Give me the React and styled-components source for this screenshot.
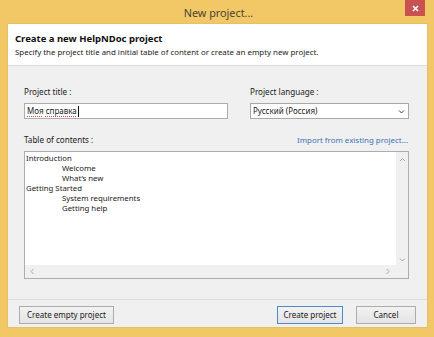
import React from 'react'
import styled, { createGlobalStyle } from 'styled-components'

const Global = createGlobalStyle`
	html, body {
		margin: 0;
		padding: 0;
		background: #f2c867;
	}
	* {
		box-sizing: border-box;
	}
`

const toc = [
	{ label: 'Introduction', level: 0 },
	{ label: 'Welcome', level: 1 },
	{ label: 'What\u2019s new', level: 1 },
	{ label: 'Getting Started', level: 0 },
	{ label: 'System requirements', level: 1 },
	{ label: 'Getting help', level: 1 },
]

function Chevron({ dir, size = 7, color = '#a6a6a6' }) {
	const pts = {
		up: '1,5 3.5,2.5 6,5',
		down: '1,2.5 3.5,5 6,2.5',
		left: '4.5,1 2,3.5 4.5,6',
		right: '2.5,1 5,3.5 2.5,6',
	}[dir]
	return (
		<svg width={size} height={size} viewBox="0 0 7 7">
			<polyline points={pts} fill="none" stroke={color} strokeWidth="1" />
		</svg>
	)
}

function App() {
	return (
		<>
			<Global />
			<Frame>
				<TitleBar>
					<span />
					<Title>New project...</Title>
					<CloseButton>
						<svg width="7" height="7" viewBox="0 0 7 7">
							<path d="M1 1L6 6M6 1L1 6" stroke="#fff" strokeWidth="1.6" />
						</svg>
					</CloseButton>
				</TitleBar>
				<Client>
					<Header>
						<Heading>Create a new HelpNDoc project</Heading>
						<SubHeading>
							Specify the project title and initial table of content or create an empty new project.
						</SubHeading>
					</Header>
					<Body>
						<FieldRow>
							<Field>
								<Label>Project title :</Label>
								<TextInput>
									<Misspelled>Моя</Misspelled>&nbsp;<Misspelled>справка</Misspelled>
									<Caret />
								</TextInput>
							</Field>
							<Field>
								<Label>Project language :</Label>
								<Select>
									<span>Русский (Россия)</span>
									<Chevron dir="down" color="#444" />
								</Select>
							</Field>
						</FieldRow>
						<TocHead>
							<Label>Table of contents :</Label>
							<Link>Import from existing project...</Link>
						</TocHead>
						<TreeBox>
							<TreeList>
								{toc.map((item) => (
									<TreeItem key={item.label} level={item.level}>
										{item.label}
									</TreeItem>
								))}
							</TreeList>
							<VScroll>
								<Chevron dir="up" />
								<Chevron dir="down" />
							</VScroll>
							<HScroll>
								<Chevron dir="left" />
								<Chevron dir="right" />
							</HScroll>
							<Corner />
						</TreeBox>
					</Body>
					<Footer>
						<Button width={95}>Create empty project</Button>
						<Spacer />
						<Button width={66} primary>Create project</Button>
						<Button width={60}>Cancel</Button>
					</Footer>
				</Client>
			</Frame>
		</>
	)
}

const Frame = styled.div`
	width: 434px;
	height: 337px;
	background: #f2c867;
	display: flex;
	flex-direction: column;
	padding: 0 6px 9px 7px;
	font-family: 'Noto Sans', 'Open Sans', sans-serif;
	color: #1a1a1a;
`

const TitleBar = styled.div`
	height: 23px;
	flex-shrink: 0;
	display: grid;
	grid-template-columns: 1fr auto 1fr;
	align-items: start;
`

const Title = styled.div`
	font-size: 10.8px;
	line-height: 25px;
	color: #4a4234;
	padding-left: 2px;
`

const CloseButton = styled.div`
	justify-self: end;
	width: 20px;
	height: 16px;
	margin-right: 3px;
	background: #c9514f;
	display: flex;
	align-items: center;
	justify-content: center;
`

const Client = styled.div`
	flex: 1;
	background: #f0f0f0;
	display: flex;
	flex-direction: column;
	border: 1px solid #e6c068;
`

const Header = styled.div`
	background: #fff;
	padding: 9px 7px 5px;
	border-bottom: 1px solid #dcdcdc;
	height: 42px;
`

const Heading = styled.div`
	font-size: 9.5px;
	font-weight: bold;
	line-height: 12px;
	color: #111;
`

const SubHeading = styled.div`
	font-size: 7.9px;
	line-height: 12px;
	margin-top: 1px;
	color: #222;
	white-space: nowrap;
`

const Body = styled.div`
	flex: 1;
	padding: 20px 18px 0 16px;
	display: flex;
	flex-direction: column;
`

const FieldRow = styled.div`
	display: grid;
	grid-template-columns: 204px 159px;
	column-gap: 22px;
`

const Field = styled.div`
	display: flex;
	flex-direction: column;
	gap: 5px;
`

const Label = styled.div`
	font-size: 8.1px;
	line-height: 12px;
	color: #222;
`

const TextInput = styled.div`
	height: 16px;
	background: #fff;
	border: 1px solid #abadb3;
	font-size: 8px;
	line-height: 14px;
	padding: 0 2px;
	display: flex;
	align-items: center;
	color: #222;
`

const Misspelled = styled.span`
	text-decoration: underline dotted #d04a4a;
	text-underline-offset: 2px;
`

const Caret = styled.span`
	display: inline-block;
	width: 1px;
	height: 11px;
	background: #111;
	margin-left: 1px;
`

const Select = styled(TextInput)`
	justify-content: space-between;
	padding-right: 3px;
	border-color: #a8a8a8;
`

const TocHead = styled.div`
	display: flex;
	justify-content: space-between;
	align-items: center;
	margin-top: 15px;
	margin-bottom: 5px;
`

const Link = styled.div`
	font-size: 7.9px;
	line-height: 12px;
	color: #3a74b8;
	padding-right: 1px;
`

const TreeBox = styled.div`
	height: 128px;
	width: 385px;
	background: #fff;
	border: 1px solid #abadb3;
	display: grid;
	grid-template-columns: 1fr 12px;
	grid-template-rows: 1fr 13px;
`

const TreeList = styled.div`
	padding: 1px 1px;
`

const TreeItem = styled.div`
	font-size: 7.8px;
	line-height: 10px;
	color: #1a1a1a;
	padding-left: ${(p) => p.level * 36}px;
`

const VScroll = styled.div`
	background: #f0f0f0;
	display: flex;
	flex-direction: column;
	align-items: center;
	justify-content: space-between;
	padding: 4px 0 2px;
`

const HScroll = styled.div`
	background: #f0f0f0;
	display: flex;
	align-items: center;
	justify-content: space-between;
	padding: 0 5px 0 4px;
`

const Corner = styled.div`
	background: #f0f0f0;
`

const Footer = styled.div`
	height: 28px;
	border-top: 1px solid #dcdcdc;
	display: flex;
	align-items: flex-start;
	padding: 6px 11px 0 11px;
	gap: 13px;
`

const Spacer = styled.div`
	flex: 1;
`

const Button = styled.div`
	height: 18px;
	width: ${(p) => p.width}px;
	background: linear-gradient(#f2f2f2, #e4e4e4);
	border: 1px solid ${(p) => (p.primary ? '#4b8ccc' : '#acacac')};
	font-size: 8px;
	line-height: 16px;
	color: #1a1a1a;
	text-align: center;
	white-space: nowrap;
`

export default App
